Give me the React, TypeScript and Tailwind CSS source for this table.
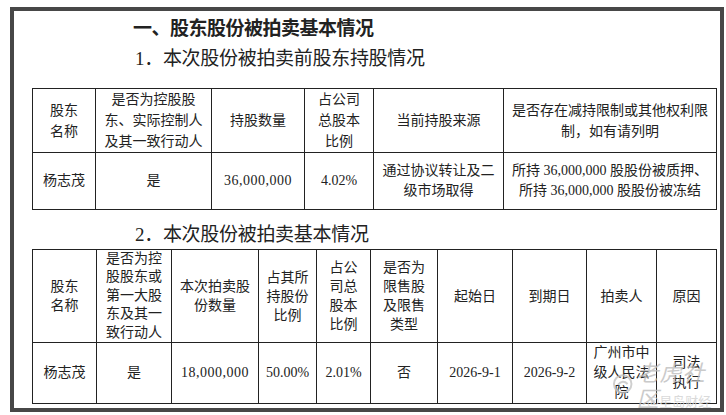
import React from "react";

const th = "border border-[#222] p-0 text-center align-middle font-normal";
const td = "border border-[#222] p-0 text-center align-middle";

const Wm: React.FC = () => (
  <>
    <div className="absolute left-[612px] top-[358px] flex items-center gap-[3px] text-[#bdbdbd] opacity-80">
      <svg width="22" height="22" viewBox="0 0 22 22">
        <circle cx="11" cy="11" r="9" fill="none" stroke="#c4c4c4" strokeWidth="2" />
        <path d="M6 12 Q11 6 16 11" fill="none" stroke="#c4c4c4" strokeWidth="2" />
      </svg>
      <span className="font-['Noto_Sans_CJK_SC',sans-serif] text-[22px] leading-[26px] italic tracking-[1px]">
        老虎社区
      </span>
    </div>
    <div className="absolute left-[647px] top-[393px] font-['Noto_Sans_CJK_SC',sans-serif] text-[13px] leading-[16px] text-[#d6d6d6] opacity-90">
      @星岛财经
    </div>
  </>
);

export default function App() {
  return (
    <div className="relative w-[726px] h-[415px] overflow-hidden bg-white text-[#222] font-['Liberation_Serif','Noto_Sans_CJK_SC',serif]">
      <div className="ml-[10px] mt-[7px] w-[714px] h-[405px] border-4 border-[#474747] flex flex-col">
        <div className="h-[32px] pl-[119px] flex items-center font-['Noto_Sans_CJK_SC',sans-serif] font-semibold text-[19px] tracking-[-0.5px]">
          一、股东股份被拍卖基本情况
        </div>
        <div className="h-[32px] pl-[121px] flex items-center text-[19px] tracking-[-0.3px]">
          1．本次股份被拍卖前股东持股情况
        </div>

        <table className="ml-[18px] mt-[13px] w-[684px] table-fixed border-collapse text-[14px]">
          <colgroup>
            <col className="w-[63px]" />
            <col className="w-[116px]" />
            <col className="w-[93px]" />
            <col className="w-[69px]" />
            <col className="w-[130px]" />
            <col className="w-[213px]" />
          </colgroup>
          <thead>
            <tr className="h-[63px] leading-[21px]">
              <th className={th}>股东<br />名称</th>
              <th className={th}>是否为控股股<br />东、实际控制人<br />及其一致行动人</th>
              <th className={th}>持股数量</th>
              <th className={th}>占公司<br />总股本<br />比例</th>
              <th className={th}>当前持股来源</th>
              <th className={th}>是否存在减持限制或其他权利限<br />制，如有请列明</th>
            </tr>
          </thead>
          <tbody>
            <tr className="h-[57px] leading-[20px]">
              <td className={td}>杨志茂</td>
              <td className={td}>是</td>
              <td className={`${td} tracking-[0.5px]`}>36,000,000</td>
              <td className={td}>4.02%</td>
              <td className={td}>通过协议转让及二<br />级市场取得</td>
              <td className={td}>所持 36,000,000 股股份被质押、<br />所持 36,000,000 股股份被冻结</td>
            </tr>
          </tbody>
        </table>

        <div className="h-[39px] pl-[121px] pt-[13px] text-[19px] leading-[24px] tracking-[-0.3px]">
          2．本次股份被拍卖基本情况
        </div>

        <table className="ml-[18px] w-[684px] table-fixed border-collapse text-[14px]">
          <colgroup>
            <col className="w-[64px]" />
            <col className="w-[75px]" />
            <col className="w-[87px]" />
            <col className="w-[58px]" />
            <col className="w-[54px]" />
            <col className="w-[67px]" />
            <col className="w-[75px]" />
            <col className="w-[74px]" />
            <col className="w-[70px]" />
            <col className="w-[60px]" />
          </colgroup>
          <thead>
            <tr className="h-[93px] leading-[19px]">
              <th className={th}>股东<br />名称</th>
              <th className={`${th} leading-[18.4px]`}>是否为控<br />股股东或<br />第一大股<br />东及其一<br />致行动人</th>
              <th className={th}>本次拍卖股<br />份数量</th>
              <th className={th}>占其所<br />持股份<br />比例</th>
              <th className={th}>占公<br />司总<br />股本<br />比例</th>
              <th className={th}>是否为<br />限售股<br />及限售<br />类型</th>
              <th className={th}>起始日</th>
              <th className={th}>到期日</th>
              <th className={th}>拍卖人</th>
              <th className={th}>原因</th>
            </tr>
          </thead>
          <tbody>
            <tr className="h-[61px] leading-[20px]">
              <td className={td}>杨志茂</td>
              <td className={td}>是</td>
              <td className={`${td} tracking-[0.5px]`}>18,000,000</td>
              <td className={td}>50.00%</td>
              <td className={td}>2.01%</td>
              <td className={td}>否</td>
              <td className={td}>2026-9-1</td>
              <td className={td}>2026-9-2</td>
              <td className={td}>广州市中<br />级人民法<br />院</td>
              <td className={td}>司法<br />执行</td>
            </tr>
          </tbody>
        </table>
      </div>
      <Wm />
    </div>
  );
}
